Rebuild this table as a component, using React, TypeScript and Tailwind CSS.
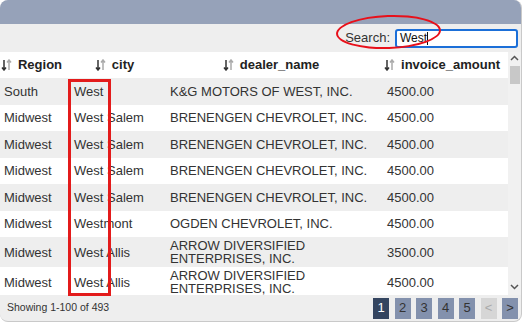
import React from "react";

type Row = { region: string; city: string; dealer: string; amount: string };

const rows: Row[] = [
  { region: "South", city: "West", dealer: "K&G MOTORS OF WEST, INC.", amount: "4500.00" },
  { region: "Midwest", city: "West Salem", dealer: "BRENENGEN CHEVROLET, INC.", amount: "4500.00" },
  { region: "Midwest", city: "West Salem", dealer: "BRENENGEN CHEVROLET, INC.", amount: "4500.00" },
  { region: "Midwest", city: "West Salem", dealer: "BRENENGEN CHEVROLET, INC.", amount: "4500.00" },
  { region: "Midwest", city: "West Salem", dealer: "BRENENGEN CHEVROLET, INC.", amount: "4500.00" },
  { region: "Midwest", city: "Westmont", dealer: "OGDEN CHEVROLET, INC.", amount: "4500.00" },
  { region: "Midwest", city: "West Allis", dealer: "ARROW DIVERSIFIED ENTERPRISES, INC.", amount: "3500.00" },
  { region: "Midwest", city: "West Allis", dealer: "ARROW DIVERSIFIED ENTERPRISES, INC.", amount: "4500.00" },
];

const cols = "grid grid-cols-[70px_96px_217px_125px]";

const SortIcon = () => (
  <svg width="11" height="12" viewBox="0 0 11 12" className="shrink-0">
    <path d="M3 1v10M1 8.5l2 2.5 2-2.5" stroke="#333" strokeWidth="1.5" fill="none" />
    <path d="M8 11V1M6 3.5L8 1l2 2.5" stroke="#aaa" strokeWidth="1.5" fill="none" />
  </svg>
);

const Header = ({ label }: { label: string }) => (
  <div className="flex items-center justify-center gap-[6px] pr-[7px] font-bold text-[13px] text-[#222]">
    <SortIcon />
    <span>{label}</span>
  </div>
);

const PageButton = ({ label, kind }: { label: string; kind: "active" | "normal" | "disabled" }) => {
  const cls =
    kind === "active"
      ? "bg-[#344560] text-white"
      : kind === "disabled"
      ? "bg-[#d6d6d6] text-[#aaa]"
      : "bg-[#8391ad] text-[#333]";
  return (
    <div className={`w-4 h-[21px] flex items-center justify-center text-[13px] ${cls}`}>{label}</div>
  );
};

export default function App() {
  return (
    <div className="w-[524px] h-[323px] bg-white font-['Liberation_Sans',Arial,sans-serif] text-[#333]">
      <div className="relative w-[522px] h-[322px] rounded-lg border-r border-b border-[#c9c9c9] bg-[#eeeeee] flex flex-col overflow-hidden">
        <div className="h-6 bg-[#96a2b9] shrink-0" />

        <div className="h-7 shrink-0 flex items-center justify-end gap-[5px] pr-[3px]">
          <span className="text-[13px] text-[#333]">Search:</span>
          <div className="w-[123px] h-[19px] border-2 border-[#1b6fd8] rounded-[3px] bg-white flex items-center pl-[3px] text-[12px] text-[#111]">
            West<span className="w-px h-[13px] bg-[#111]" />
          </div>
        </div>

        <div className="flex h-[243px] shrink-0">
          <div className="w-[508px] overflow-hidden">
            <div className={`${cols} h-[26px] bg-white items-center`}>
              <Header label="Region" />
              <Header label="city" />
              <Header label="dealer_name" />
              <Header label="invoice_amount" />
            </div>
            {rows.map((r, i) => {
              const tall = r.dealer.length > 30;
              return (
                <div
                  key={i}
                  className={`${cols} items-center text-[13px] leading-[13px] text-[#333] ${
                    tall ? "h-[30px]" : "h-[26.5px]"
                  } ${i % 2 === 0 ? "bg-[#eeeeee]" : "bg-white"}`}
                >
                  <div className="pl-1">{r.region}</div>
                  <div className="pl-1">{r.city}</div>
                  <div className="pl-1 pr-2">{r.dealer}</div>
                  <div className="pl-1">{r.amount}</div>
                </div>
              );
            })}
          </div>
          <div className="w-[13px] bg-[#f1f1f1] flex flex-col items-center">
            <svg width="9" height="6" viewBox="0 0 9 6" className="mt-[3px]">
              <path d="M1 5l3.5-3.5L8 5" stroke="#555" strokeWidth="1.5" fill="none" />
            </svg>
            <div className="mt-[5px] w-[10px] h-[18px] bg-[#c8c8c8]" />
            <div className="flex-1" />
            <svg width="9" height="6" viewBox="0 0 9 6" className="mb-[5px]">
              <path d="M1 1l3.5 3.5L8 1" stroke="#555" strokeWidth="1.5" fill="none" />
            </svg>
          </div>
        </div>

        <div className="flex-1 flex items-center justify-between pl-[7px] pr-[3px]">
          <span className="text-[10.5px] text-[#333]">Showing 1-100 of 493</span>
          <div className="flex gap-[5.5px]">
            <PageButton label="1" kind="active" />
            <PageButton label="2" kind="normal" />
            <PageButton label="3" kind="normal" />
            <PageButton label="4" kind="normal" />
            <PageButton label="5" kind="normal" />
            <PageButton label="<" kind="disabled" />
            <PageButton label=">" kind="normal" />
          </div>
        </div>

        <div className="absolute left-[336px] top-[15px] w-[105px] h-[34px] rounded-[50%] border-[2.5px] border-[#e8101a] -rotate-2" />
        <div className="absolute left-[68px] top-[79px] w-[43px] h-[217px] border-[3px] border-[#e31b1b]" />
      </div>
    </div>
  );
}
